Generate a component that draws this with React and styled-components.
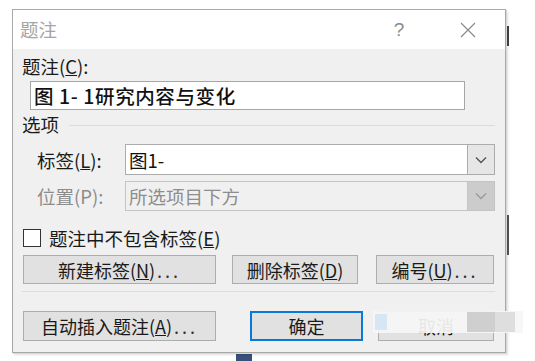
import React from "react";
import styled, { createGlobalStyle } from "styled-components";

const Global = createGlobalStyle`
  html, body { margin: 0; padding: 0; background: #ffffff; }
  body { font-family: "Noto Sans CJK SC", "Noto Sans", sans-serif; overflow: hidden; }
  #root { width: 535px; height: 361px; position: relative; }
`;

const Page = styled.div`
  width: 535px;
  height: 361px;
  position: relative;
  background: #fff;
  padding: 9px 0 0 12px;
  box-sizing: border-box;
`;

const Dialog = styled.div`
  width: 494px;
  height: 344px;
  box-sizing: border-box;
  border: 1px solid #a8a8a8;
  box-shadow: 1px 1px 0 #d8d8d8, 2px 2px 2px rgba(0,0,0,0.12);
  background: #f0f0f0;
  display: flex;
  flex-direction: column;
  position: relative;
`;

const TitleBar = styled.div`
  height: 39px;
  background: #ffffff;
  display: flex;
  align-items: center;
  padding-left: 7px;
  padding-right: 18px;
  color: #a5a5a5;
  font-size: 18.5px;
`;

const TitleText = styled.div`
  flex: 1;
  margin-top: -2px;
`;

const TitleBtn = styled.div`
  width: ${(p) => p.w}px;
  margin-left: ${(p) => p.ml || 0}px;
  display: flex;
  justify-content: center;
  align-items: center;
  color: #8a8a8a;
  font-size: 19px;
  font-family: "Liberation Sans", sans-serif;
`;

const Body = styled.div`
  flex: 1;
  padding: 4px 10px 0 9px;
  display: flex;
  flex-direction: column;
  font-size: 18.5px;
  color: #1a1a1a;
`;

const Label = styled.div`
  height: 26px;
  line-height: 26px;
  color: ${(p) => (p.disabled ? "#8c8c8c" : "#1a1a1a")};
  white-space: nowrap;
`;

const TextInput = styled.div`
  margin: 2px 30px 0 8px;
  height: 29px;
  box-sizing: border-box;
  border: 1px solid #a6a6a6;
  background: #fff;
  font-size: 19.5px;
  line-height: 27px;
  padding-left: 3px;
  color: #111;
  font-weight: 500;
  letter-spacing: 0.6px;
  white-space: nowrap;
`;

const GroupHead = styled.div`
  display: flex;
  align-items: center;
  height: 22px;
  margin-top: 3px;
  gap: 10px;
`;

const GroupLine = styled.div`
  flex: 1;
  height: 1px;
  background: #dcdcdc;
  margin-top: 2px;
`;

const FieldRow = styled.div`
  display: grid;
  grid-template-columns: 88px 1fr;
  align-items: center;
  margin-top: ${(p) => p.mt}px;
  padding-left: 15px;
`;

const Combo = styled.div`
  height: ${(p) => p.h}px;
  box-sizing: border-box;
  border: 1px solid ${(p) => (p.disabled ? "#c4c4c4" : "#acacac")};
  background: ${(p) => (p.disabled ? "#f0f0f0" : "#ffffff")};
  display: flex;
  align-items: stretch;
`;

const ComboText = styled.div`
  flex: 1;
  padding-left: 3px;
  display: flex;
  align-items: center;
  font-size: 18.5px;
  color: ${(p) => (p.disabled ? "#8d8d8d" : "#111")};
  white-space: nowrap;
`;

const ComboBtn = styled.div`
  width: 26px;
  border-left: 1px solid ${(p) => (p.disabled ? "#c4c4c4" : "#acacac")};
  background: ${(p) => (p.disabled ? "#cccccc" : "#e6e6e6")};
  display: flex;
  align-items: center;
  justify-content: center;
`;

const CheckRow = styled.div`
  display: flex;
  align-items: center;
  gap: 8px;
  margin-top: 16px;
  height: 22px;
  padding-left: 1px;
`;

const Box = styled.div`
  width: 18px;
  height: 18px;
  box-sizing: border-box;
  border: 1px solid #333;
  background: #fff;
`;

const ButtonRow = styled.div`
  display: flex;
  align-items: center;
  margin-top: ${(p) => p.mt}px;
  padding-left: 1px;
`;

const Button = styled.div`
  width: ${(p) => p.w}px;
  height: ${(p) => p.h}px;
  margin-left: ${(p) => p.ml || 0}px;
  box-sizing: border-box;
  border: ${(p) => (p.primary ? "2px solid #0a78d7" : "1px solid #adadad")};
  background: #e1e1e1;
  display: flex;
  align-items: center;
  justify-content: center;
  font-size: 18px;
  color: #1a1a1a;
  white-space: nowrap;
`;

const Dots = styled.span`
  letter-spacing: 3px;
  margin-left: 2px;
  color: #333;
`;

const Sep = styled.div`
  height: 1px;
  background: #dcdcdc;
  margin-top: 7px;
`;

const Watermark = styled.div`
  position: absolute;
  left: 373px;
  top: 311px;
  width: 150px;
  height: 22px;
  background: rgba(246, 246, 246, 0.93);
  display: flex;
  align-items: center;
  pointer-events: none;
`;

const WmBlock = styled.div`
  width: ${(p) => p.w}px;
  height: ${(p) => p.h}px;
  margin-left: ${(p) => p.ml}px;
  background: ${(p) => p.c};
`;

const Behind = styled.div`
  position: absolute;
  left: ${(p) => p.x}px;
  top: ${(p) => p.y}px;
  width: ${(p) => p.w}px;
  height: ${(p) => p.h}px;
  background: ${(p) => p.c};
`;

const Chevron = ({ color }) => (
  <svg width="12" height="8" viewBox="0 0 12 8">
    <path d="M1 1.5 L6 6.5 L11 1.5" fill="none" stroke={color} strokeWidth="1.4" />
  </svg>
);

export default function App() {
  return (
    <Page>
      <Global />
      <Behind x={507} y={26} w={2} h={20} c="#444" />
      <Behind x={507} y={215} w={2} h={40} c="#555" />
      <Behind x={236} y={353} w={16} h={8} c="#3a4f7a" />
      <Dialog>
        <TitleBar>
          <TitleText>题注</TitleText>
          <TitleBtn w={30}>?</TitleBtn>
          <TitleBtn w={38} ml={35}>
            <svg width="18" height="18" viewBox="0 0 18 18">
              <path d="M2 2 L16 16 M16 2 L2 16" stroke="#8a8a8a" strokeWidth="1.2" />
            </svg>
          </TitleBtn>
        </TitleBar>
        <Body>
          <Label>题注(<u>C</u>):</Label>
          <TextInput>图 1- 1研究内容与变化</TextInput>
          <GroupHead>
            <span>选项</span>
            <GroupLine />
          </GroupHead>
          <FieldRow mt={9}>
            <Label>标签(<u>L</u>):</Label>
            <Combo h={31}>
              <ComboText>图1-</ComboText>
              <ComboBtn>
                <Chevron color="#555" />
              </ComboBtn>
            </Combo>
          </FieldRow>
          <FieldRow mt={6}>
            <Label disabled>位置(P):</Label>
            <Combo h={30} disabled>
              <ComboText disabled>所选项目下方</ComboText>
              <ComboBtn disabled>
                <Chevron color="#9a9a9a" />
              </ComboBtn>
            </Combo>
          </FieldRow>
          <CheckRow>
            <Box />
            <span>题注中不包含标签(<u>E</u>)</span>
          </CheckRow>
          <ButtonRow mt={6}>
            <Button w={193} h={29}>
              新建标签(<u>N</u>)<Dots>...</Dots>
            </Button>
            <Button w={126} h={29} ml={16}>
              删除标签(<u>D</u>)
            </Button>
            <Button w={118} h={29} ml={18}>
              编号(<u>U</u>)<Dots>...</Dots>
            </Button>
          </ButtonRow>
          <Sep />
          <ButtonRow mt={19}>
            <Button w={193} h={30}>
              自动插入题注(<u>A</u>)<Dots>...</Dots>
            </Button>
            <Button w={113} h={30} ml={34} primary>
              确定
            </Button>
            <Button w={116} h={30} ml={15}>
              取消
            </Button>
          </ButtonRow>
        </Body>
      </Dialog>
      <Watermark>
        <WmBlock w={12} h={16} ml={2} c="#d6e6f4" />
        <WmBlock w={28} h={20} ml={80} c="#cfcfcf" />
        <WmBlock w={20} h={20} ml={0} c="#dedede" />
      </Watermark>
    </Page>
  );
}
